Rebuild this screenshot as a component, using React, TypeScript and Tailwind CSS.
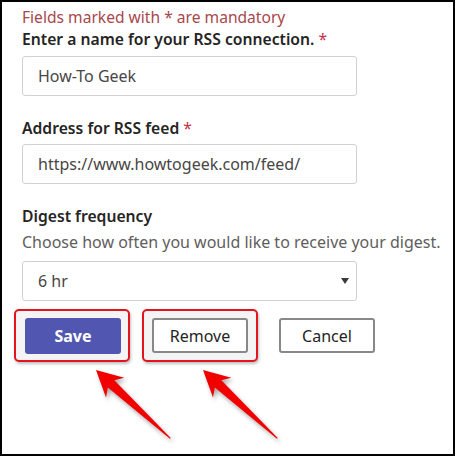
import React from "react";

const font = { fontFamily: '"Noto Sans", "Open Sans", sans-serif' };

function Arrow({ x, y }: { x: number; y: number }) {
  return (
    <polygon
      transform={`translate(${x},${y}) rotate(42.6)`}
      points="0,0 26,-13.5 20.5,-4.8 101,-0.6 101,0.6 20.5,4.8 26,13.5"
      fill="#f20000"
    />
  );
}

export default function App() {
  return (
    <div
      className="relative w-[455px] h-[456px] bg-white border-2 border-black overflow-hidden"
      style={font}
    >
      <div className="flex flex-col pl-[20px] pt-[4px] text-[16px] leading-[22px]">
        <div className="text-[#a8474b] text-[15.6px]">Fields marked with * are mandatory</div>
        <div className="font-semibold text-[15.7px] text-[#252423]">
          Enter a name for your RSS connection. <span className="text-[#c4314b] font-normal">*</span>
        </div>
        <div className="mt-[6px] w-[335px] h-[40px] border border-[#d1d1d1] rounded-[3px] flex items-center pl-[15px] text-[#484644]">
          How-To Geek
        </div>
        <div className="mt-[21px] font-semibold text-[15.7px] text-[#252423]">
          Address for RSS feed <span className="text-[#c4314b] font-normal">*</span>
        </div>
        <div className="mt-[5px] w-[335px] h-[40px] border border-[#d1d1d1] rounded-[3px] flex items-center pl-[15px] text-[#484644]">
          https://www.howtogeek.com/feed/
        </div>
        <div className="mt-[21px] font-semibold text-[15.7px] text-[#252423]">Digest frequency</div>
        <div className="mt-[4px] text-[#605e5c]">
          Choose how often you would like to receive your digest.
        </div>
        <div className="mt-[8px] w-[335px] h-[40px] border border-[#d1d1d1] rounded-[3px] flex items-center justify-between pl-[15px] pr-[7px] text-[#484644]">
          <span>6 hr</span>
          <svg width="8" height="6" viewBox="0 0 8 6">
            <polygon points="0,0 8,0 4,6" fill="#3b3a39" />
          </svg>
        </div>
      </div>
      <div className="flex items-start pl-[12px] mt-[8px]">
        <div className="w-[116px] h-[53px] border-2 border-[#e3141b] rounded-[5px] bg-[#f4f4f4] shadow-[1px_2px_3px_rgba(0,0,0,0.25)] pl-[9px] pt-[7px]">
          <div className="w-[96px] h-[36px] rounded-[3px] bg-[#5157b1] text-white font-bold text-[16px] flex items-center justify-center">
            Save
          </div>
        </div>
        <div className="ml-[12px] w-[116px] h-[53px] border-2 border-[#e3141b] rounded-[5px] bg-[#f4f4f4] shadow-[1px_2px_3px_rgba(0,0,0,0.25)] pl-[8px] pt-[7px]">
          <div className="w-[96px] h-[35px] rounded-[3px] bg-white border-2 border-[#8a8886] text-[#252423] text-[16px] flex items-center justify-center">
            Remove
          </div>
        </div>
        <div className="ml-[21px] mt-[9px] w-[96px] h-[35px] rounded-[3px] bg-white border-2 border-[#8a8886] text-[#252423] text-[16px] flex items-center justify-center">
          Cancel
        </div>
      </div>
      <svg
        className="absolute left-[-2px] top-[-2px] drop-shadow-[2px_3px_2px_rgba(0,0,0,0.35)]"
        width="455"
        height="456"
      >
        <Arrow x={96} y={370} />
        <Arrow x={203} y={370} />
      </svg>
    </div>
  );
}
